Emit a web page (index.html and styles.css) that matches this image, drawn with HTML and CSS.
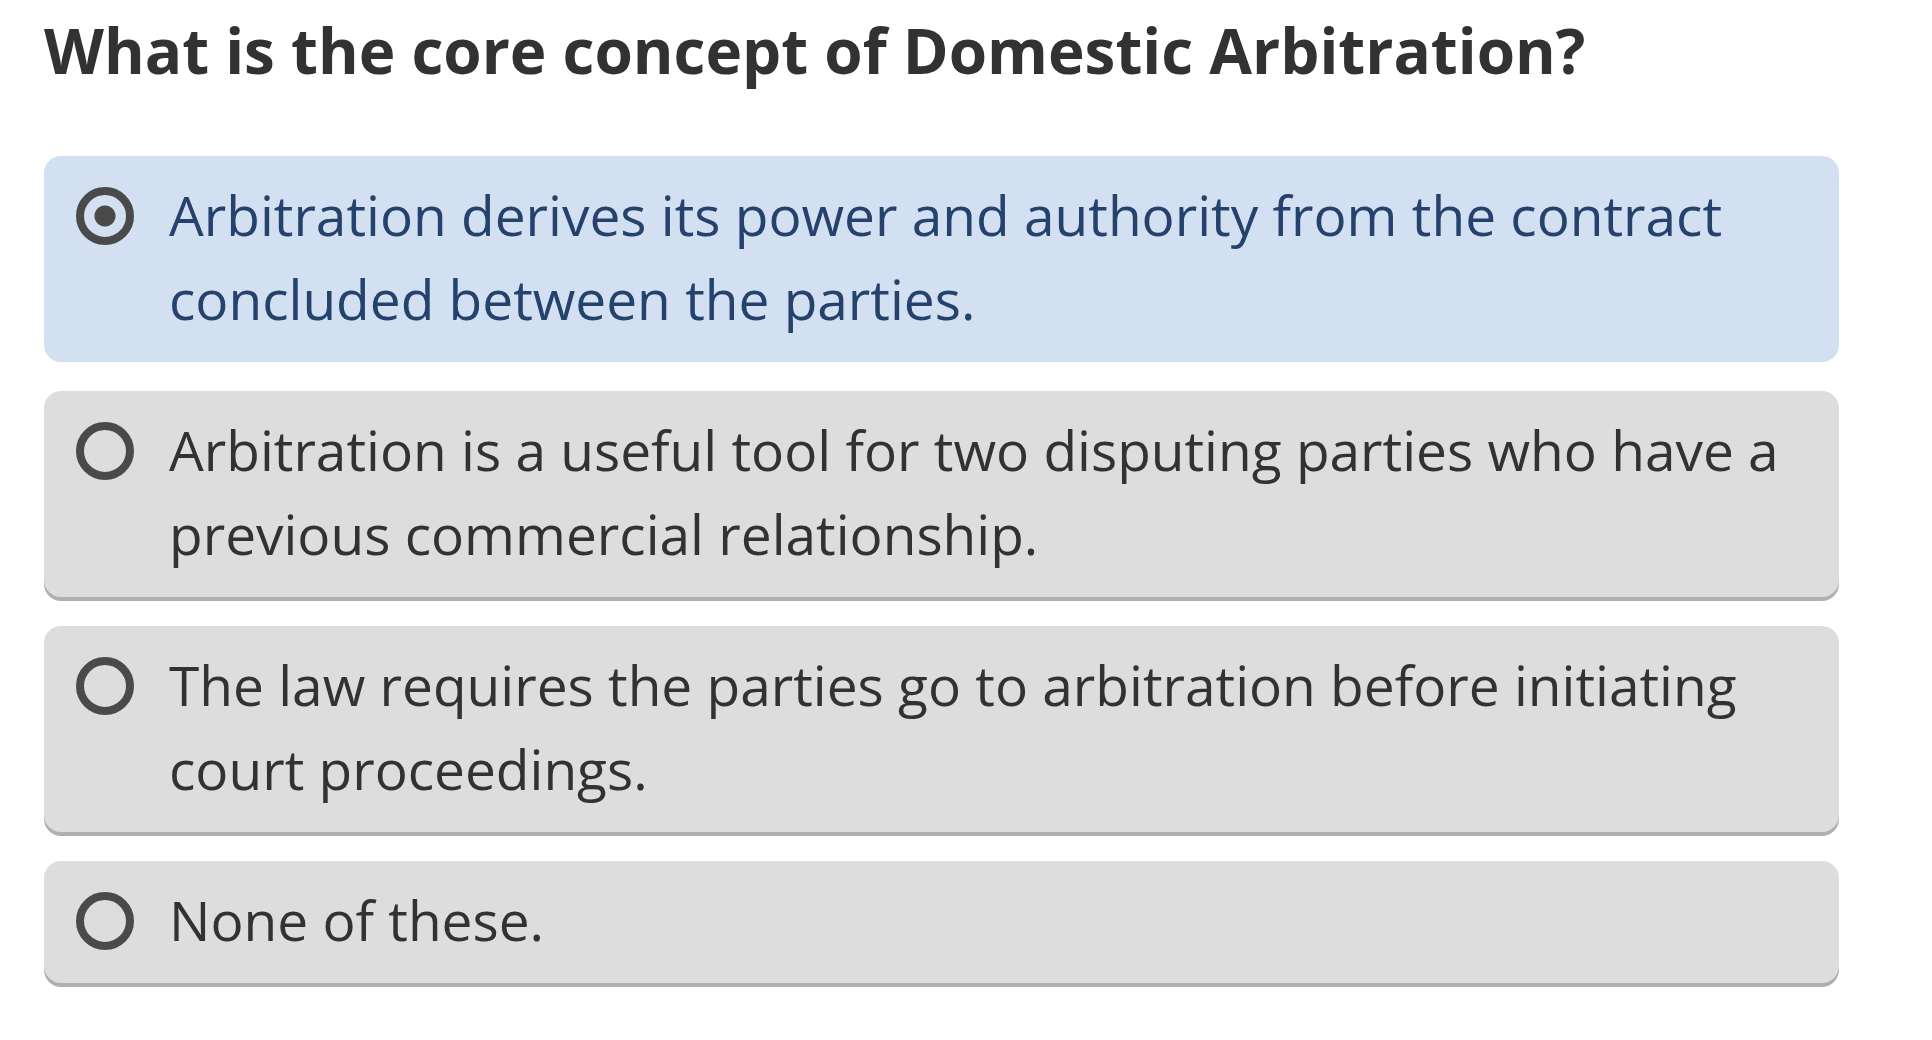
FILE: index.html
```html
<!DOCTYPE html>
<html lang="en">
<head>
<meta charset="utf-8">
<meta name="viewport" content="width=device-width, initial-scale=1">
<title>Domestic Arbitration quiz</title>
<link rel="stylesheet" href="styles.css">
</head>
<body>
<main>
<form class="quiz">
<h1 class="question" id="question">What is the core concept of Domestic Arbitration?</h1>
<div class="answers" role="radiogroup" aria-labelledby="question">
<label class="answer"><input class="radio" type="radio" name="answer" checked><span class="text">Arbitration derives its power and authority from the contract concluded between the parties.</span></label>
<label class="answer"><input class="radio" type="radio" name="answer"><span class="text">Arbitration is a useful tool for two disputing parties who have a previous commercial relationship.</span></label>
<label class="answer"><input class="radio" type="radio" name="answer"><span class="text">The law requires the parties go to arbitration before initiating court proceedings.</span></label>
<label class="answer"><input class="radio" type="radio" name="answer"><span class="text">None of these.</span></label>
</div>
</form>
</main>
</body>
</html>
```
FILE: styles.css
```css
* { box-sizing: border-box; }
body { margin: 0; background: #fff; color: #323232; font-family: "Open Sans", "Noto Sans", sans-serif; }
.quiz { padding: 8px 93px 52px 44px; }
.question { margin: 0 0 64px; font-size: 62px; line-height: 84px; font-weight: 700; }
.answers { display: grid; gap: 29px; }
.answer { display: flex; align-items: flex-start; gap: 35px; padding: 17px 32px 21px; border-radius: 17px; background: #ddd; box-shadow: 0 4px 0 #b0b0b0; font-size: 55px; line-height: 84px; font-weight: 500; cursor: pointer; }
.answer:has(:checked) { background: #d3e0f1; color: #25426d; box-shadow: none; }
.radio { appearance: none; flex: none; width: 58px; height: 58px; margin: 14px 0 0; border: 8px solid #4a4a4a; border-radius: 50%; }
.radio:checked { background: radial-gradient(circle, #4a4a4a 10px, transparent 11px); }
.text { flex: 1; }
```
